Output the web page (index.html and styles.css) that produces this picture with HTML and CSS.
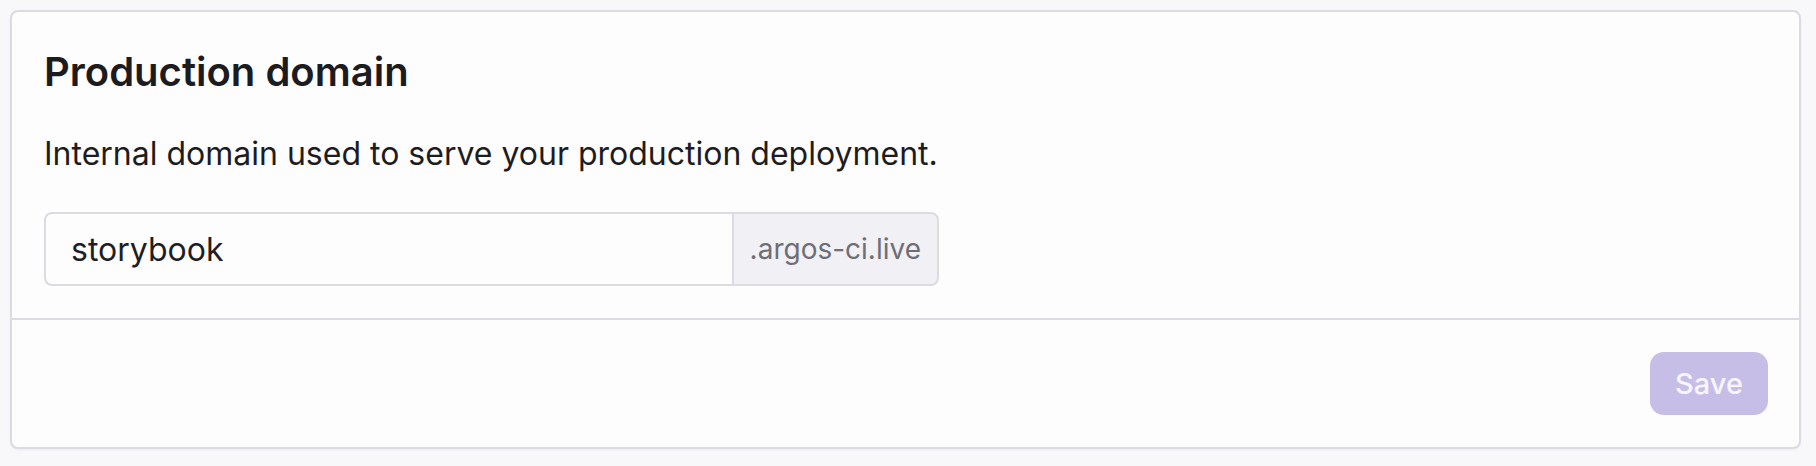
FILE: index.html
```html
<!DOCTYPE html>
<html lang="en">
<head>
<meta charset="utf-8">
<title>Production domain</title>
<link rel="stylesheet" href="styles.css">
</head>
<body>
<div class="page">
  <form class="card">
    <div class="card-body">
      <h2 class="card-title">Production domain</h2>
      <p class="card-desc">Internal domain used to serve your production deployment.</p>
      <div class="input-group">
        <input class="input" type="text" value="storybook" aria-label="Domain">
        <span class="addon">.argos-ci.live</span>
      </div>
    </div>
    <div class="card-footer">
      <button class="btn" type="button" disabled>Save</button>
    </div>
  </form>
</div>
</body>
</html>
```

FILE: styles.css
```css
* { box-sizing: border-box; }
html, body { margin: 0; padding: 0; }
body {
  background: #f8f8fa;
  font-family: Inter, "Noto Sans", sans-serif;
  color: #1c1b20;
}
.page {
  padding: 10px 15px 17px 10px;
}
.card {
  display: flex;
  flex-direction: column;
  width: 1791px;
  height: 439px;
  background: #fdfdfd;
  border: 2px solid #dcdbe1;
  border-radius: 8px;
  box-shadow: 0 1px 2px rgba(0,0,0,0.05);
  margin: 0;
}
.card-body {
  padding: 32px 32px 32px 32px;
  border-bottom: 2px solid #dcdbe1;
}
.card-title {
  margin: 0;
  font-size: 40px;
  font-weight: 600;
  line-height: 56px;
  color: #1c1b20;
}
.card-desc {
  margin: 32px 0 0;
  font-size: 32px;
  line-height: 44px;
  color: #1d1c21;
}
.input-group {
  display: flex;
  width: 895px;
  height: 74px;
  margin-top: 36px;
}
.input {
  flex: 1;
  min-width: 0;
  height: 100%;
  border: 2px solid #dcdbe1;
  border-right: none;
  border-radius: 8px 0 0 8px;
  background: #fdfdfd;
  padding: 0 25px;
  font-family: inherit;
  font-size: 32px;
  color: #1f1e24;
  outline: none;
}
.addon {
  display: flex;
  align-items: center;
  height: 100%;
  padding: 0 16px;
  border: 2px solid #dcdbe1;
  border-radius: 0 8px 8px 0;
  background: #f1f0f4;
  font-size: 28px;
  color: #6f6e77;
}
.card-footer {
  flex: 1;
  display: flex;
  align-items: center;
  justify-content: flex-end;
  padding: 0 31px;
}
.btn {
  width: 118px;
  height: 63px;
  border: none;
  border-radius: 14px;
  background: #c7bee7;
  color: #f7f5fd;
  font-family: inherit;
  font-size: 29px;
  font-weight: 500;
  cursor: default;
}
```
